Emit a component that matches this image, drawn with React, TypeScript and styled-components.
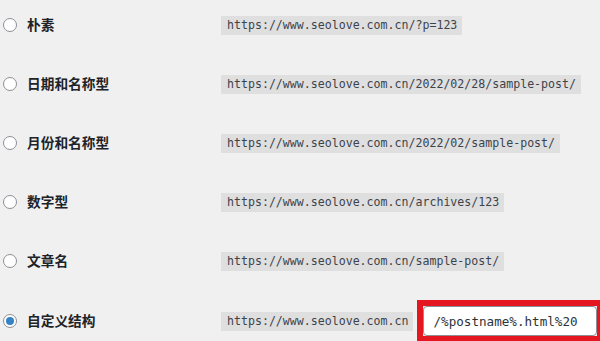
import React from "react";
import styled, { createGlobalStyle } from "styled-components";

// permalink settings list, one radio row per structure

const GlobalStyle = createGlobalStyle`
  html, body {
    margin: 0;
    padding: 0;
    background: #f0f0f1;
  }
`;

const StyledList = styled.div`
  display: flex;
  flex-direction: column;
  gap: 19px;
  padding-top: 5px;
  width: 600px;
  height: 341px;
  overflow: hidden;
  box-sizing: border-box;
`;

const StyledRow = styled.label`
  display: grid;
  grid-template-columns: 221px 1fr;
  align-items: center;
  height: 40px;
`;

const StyledOption = styled.div`
  display: flex;
  align-items: center;
  gap: 10px;
  padding-left: 3px;
`;

const StyledRadio = styled.span<{ $checked?: boolean }>`
  width: 14px;
  height: 14px;
  box-sizing: border-box;
  border-radius: 50%;
  border: 1px solid #8c8f94;
  background: #fff;
  display: flex;
  align-items: center;
  justify-content: center;

  &::after {
    content: "";
    display: ${(p) => (p.$checked ? "block" : "none")};
    width: 8px;
    height: 8px;
    border-radius: 50%;
    background: #3582c4;
  }
`;

const StyledName = styled.span`
  font-family: "Noto Sans CJK SC", "Noto Sans", sans-serif;
  font-weight: 700;
  font-size: 13.7px;
  color: #1d2327;
  line-height: 1;
`;

const StyledValue = styled.div`
  display: flex;
  align-items: center;
  gap: 4px;
`;

const StyledCode = styled.code`
  font-family: "DejaVu Sans Mono", "Liberation Mono", monospace;
  font-size: 11.6px;
  line-height: 19px;
  color: #3c434a;
  background: rgba(0, 0, 0, 0.07);
  padding: 0 5px 0 6px;
  white-space: nowrap;
`;

const StyledMark = styled.div`
  border: 6px solid #e4161f;
  display: flex;
`;

const StyledInput = styled.input`
  width: 174px;
  height: 30px;
  box-sizing: border-box;
  border: 1px solid #8c8f94;
  border-radius: 4px;
  background: #fff;
  padding: 0 9px;
  font-family: "DejaVu Sans Mono", "Liberation Mono", monospace;
  font-size: 12.6px;
  color: #2c3338;
  outline: none;
`;

type Structure = {
  name: string;
  sample: string;
};

const structures: Structure[] = [
  { name: "朴素", sample: "https://www.seolove.com.cn/?p=123" },
  { name: "日期和名称型", sample: "https://www.seolove.com.cn/2022/02/28/sample-post/" },
  { name: "月份和名称型", sample: "https://www.seolove.com.cn/2022/02/sample-post/" },
  { name: "数字型", sample: "https://www.seolove.com.cn/archives/123" },
  { name: "文章名", sample: "https://www.seolove.com.cn/sample-post/" },
];

const App = (): JSX.Element => {
  return (
    <>
      <GlobalStyle />
      <StyledList>
        {structures.map((s) => (
          <StyledRow key={s.name}>
            <StyledOption>
              <StyledRadio />
              <StyledName>{s.name}</StyledName>
            </StyledOption>
            <StyledValue>
              <StyledCode>{s.sample}</StyledCode>
            </StyledValue>
          </StyledRow>
        ))}
        <StyledRow>
          <StyledOption>
            <StyledRadio $checked />
            <StyledName>自定义结构</StyledName>
          </StyledOption>
          <StyledValue>
            <StyledCode>https://www.seolove.com.cn</StyledCode>
            <StyledMark>
              <StyledInput defaultValue="/%postname%.html%20" />
            </StyledMark>
          </StyledValue>
        </StyledRow>
      </StyledList>
    </>
  );
};

export default App;
